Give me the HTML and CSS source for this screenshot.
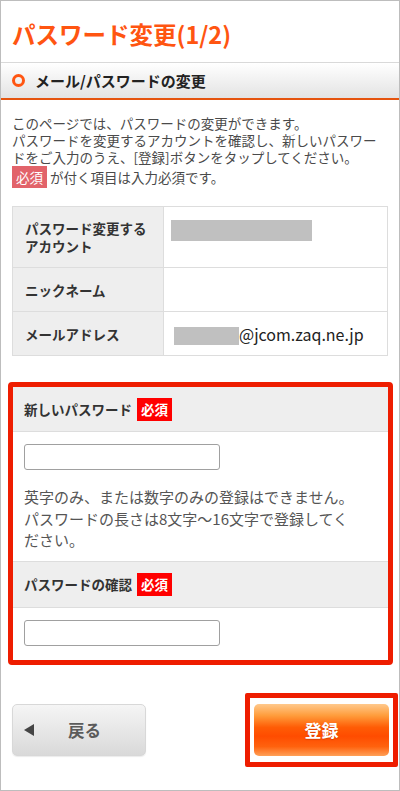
FILE: index.html
```html
<!DOCTYPE html>
<html lang="ja">
<head>
  <meta charset="UTF-8" />
  <meta name="viewport" content="width=device-width, initial-scale=1.0"/>
  <title>パスワード変更(1/2)</title>
  <link rel="stylesheet" href="styles.css">
</head>
<body>
  <div class="page">
    <h1 class="title">パスワード変更(1/2)</h1>

    <h2 class="section"><span class="ring"></span>メール/パスワードの変更</h2>

    <p class="lead">
      このページでは、パスワードの変更ができます。<br>
      パスワードを変更するアカウントを確認し、新しいパスワードをご入力のうえ、[登録]ボタンをタップしてください。<br>
      <span class="req soft">必須</span> が付く項目は入力必須です。
    </p>

    <table class="info">
      <tr class="tall">
        <th>パスワード変更する<br>アカウント</th>
        <td class="top"><span class="mask wide"></span></td>
      </tr>
      <tr>
        <th>ニックネーム</th>
        <td></td>
      </tr>
      <tr>
        <th>メールアドレス</th>
        <td><span class="mask short"></span>@jcom.zaq.ne.jp</td>
      </tr>
    </table>

    <div class="mark">
      <div class="field">
        <div class="field-head">新しいパスワード<span class="req">必須</span></div>
        <div class="field-body">
          <input type="password" class="text-input" />
          <p class="note">英字のみ、または数字のみの登録はできません。<br>パスワードの長さは8文字〜16文字で登録してください。</p>
        </div>
      </div>
      <div class="field">
        <div class="field-head">パスワードの確認<span class="req">必須</span></div>
        <div class="field-body last">
          <input type="password" class="text-input" />
        </div>
      </div>
    </div>

    <div class="actions">
      <button class="back"><span class="arrow"></span>戻る</button>
      <div class="mark-btn">
        <button class="submit">登録</button>
      </div>
    </div>
  </div>
</body>
</html>
```

FILE: styles.css
```css
* {
  box-sizing: border-box;
}

body {
  margin: 0;
  font-family: "Noto Sans CJK JP", "Noto Sans", sans-serif;
  color: #333;
  background: #fff;
}

.page {
  width: 400px;
  height: 791px;
  border: 1px solid #bdbdbd;
  overflow: hidden;
}

.title {
  margin: 0;
  padding: 18px 11px 13px;
  font-size: 23.5px;
  line-height: 30px;
  font-weight: bold;
  color: #ff5511;
}

.section {
  margin: 0;
  height: 38px;
  padding: 0 11px;
  display: flex;
  align-items: center;
  gap: 10px;
  border-top: 1px solid #d9d9d9;
  border-bottom: 2px solid #e5540f;
  background: linear-gradient(#fff, #e3e3e3);
  font-size: 15px;
  font-weight: bold;
  color: #222;
}

.ring {
  width: 13px;
  height: 13px;
  border: 3px solid #ff5511;
  border-radius: 50%;
}

.lead {
  margin: 0;
  padding: 15px 11px 0;
  font-size: 13.5px;
  line-height: 17px;
  color: #4a4a4a;
}

.req {
  display: inline-block;
  margin-left: 5px;
  padding: 0 4px;
  line-height: 23px;
  background: #ff0000;
  color: #fff;
  font-weight: bold;
}

.req.soft {
  margin-left: 0;
  line-height: 22px;
  background: #e2636a;
  font-weight: normal;
}

/* account table */
.info {
  margin: 18px 11px 0;
  width: 376px;
  border-collapse: collapse;
  font-size: 13.5px;
}

.info th,
.info td {
  border: 1px solid #ddd;
  height: 44px;
}

.info tr.tall th,
.info tr.tall td {
  height: 61px;
}

.info th {
  width: 151px;
  padding: 0 12px;
  background: #eee;
  text-align: left;
  line-height: 18px;
  font-weight: bold;
  color: #333;
}

.info td {
  padding: 0 7px;
  font-size: 16px;
  color: #222;
}

.info td.top {
  vertical-align: top;
  padding-top: 13px;
}

.mask {
  display: inline-block;
  background: #c0c0c0;
  vertical-align: middle;
}

.mask.wide {
  display: block;
  width: 141px;
  height: 21px;
}

.mask.short {
  width: 65px;
  height: 18px;
  margin-left: 3px;
}

/* red highlight frames */
.mark {
  margin: 26px 6px 0 7px;
  border: 5px solid #ee1d00;
  border-radius: 4px;
}

.field-head {
  display: flex;
  align-items: center;
  height: 45px;
  padding: 0 11px;
  background: #eee;
  border-bottom: 1px solid #ddd;
  font-size: 13.5px;
  font-weight: bold;
  color: #333;
}

.field + .field .field-head {
  height: 47px;
  border-top: 1px solid #ddd;
}

.field-body {
  padding: 12px 29px 10px 11px;
}

.field-body.last {
  padding-bottom: 14px;
}

.text-input {
  display: block;
  width: 196px;
  height: 26px;
  margin: 0;
  border: 1px solid #a0a0a0;
  border-radius: 3px;
  background: #fff;
}

.note {
  margin: 16px 0 0;
  font-size: 15px;
  line-height: 21.5px;
  color: #555;
}

/* buttons */
.actions {
  margin-top: 28px;
  padding: 0 1px 0 11px;
  display: flex;
  justify-content: space-between;
  align-items: center;
}

button {
  font: inherit;
  cursor: pointer;
}

.back {
  width: 134px;
  height: 52px;
  padding: 0 0 0 11px;
  display: flex;
  align-items: center;
  gap: 34px;
  border: 1px solid #d8d8d8;
  border-radius: 5px;
  background: linear-gradient(#f5f5f5, #d9d9d9);
  box-shadow: 0 1px 1px rgba(0,0,0,0.08);
  font-size: 16.5px;
  font-weight: bold;
  color: #5b5b5b;
}

.arrow {
  width: 0;
  height: 0;
  border-top: 6px solid transparent;
  border-bottom: 6px solid transparent;
  border-right: 10px solid #444;
}

.mark-btn {
  border: 5px solid #ee1d00;
  border-radius: 2px;
  padding: 6px 4px;
}

.submit {
  display: block;
  width: 135px;
  height: 52px;
  border: none;
  border-radius: 5px;
  background: linear-gradient(#ffc98c 0%, #ff9d3c 22%, #ff5c05 45%, #ff4c00 62%, #ff620e 82%, #ffa057 100%);
  font-size: 17px;
  font-weight: bold;
  color: #fff;
  text-shadow: 0 1px 1px rgba(160,40,0,0.4);
}
```
